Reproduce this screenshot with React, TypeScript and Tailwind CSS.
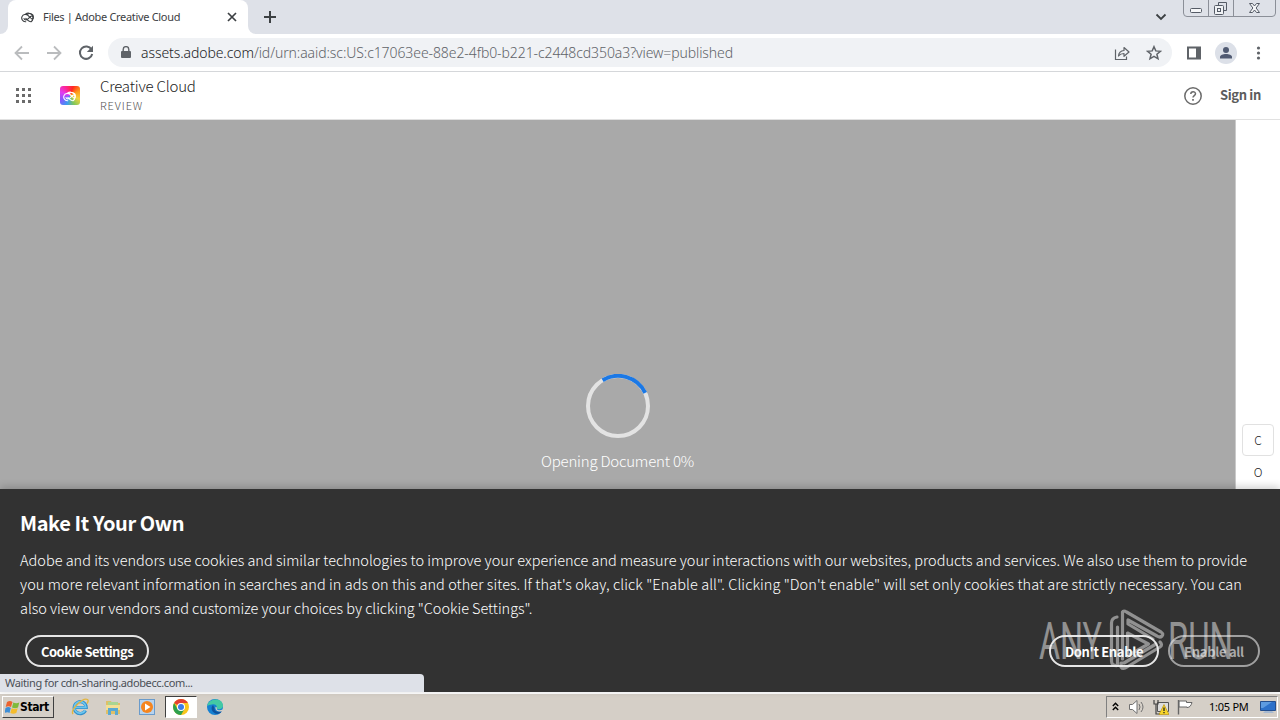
import type { ReactNode } from 'react'
import { clsx } from 'clsx'

const CLEAN = "font-['Noto_Sans_CJK_SC','Open_Sans',sans-serif]"
const TAHOMA = "font-['Noto_Sans',sans-serif]"

function CloudLogo({ className }: { className?: string }) {
  return (
    <svg viewBox="0 0 16 12" className={className} fill="none" stroke="currentColor" strokeWidth="1.2">
      <path d="M5.500 11H4.600A3.900 3.900 0 1 1 7.400 4.300l3 3" />
      <path d="M4.800 2.900A5 5 0 1 1 10.800 11c-1.400.1-2.500-.4-3.400-1.300L4.800 7.200" />
      <path d="M3 7.200c.6 2.400 3 2.400 4.800.6l2.400-2.300c1.400-1.200 3-.5 3 1 0 1.400-1.600 2-2.700 1" />
      <path d="M6.500 3.500c2.500-2.500 6.500-1 6.800 2" />
    </svg>
  )
}

function TabStrip() {
  return (
    <div className="flex h-[34px] bg-[#dee1e8]">
      <div className="w-2 bg-white">
        <div className="h-full rounded-br-lg bg-[#dee1e8]" />
      </div>
      <div className={clsx('flex w-[240px] items-center rounded-t-lg bg-white pl-[13px] pr-[10px] text-[11px] text-[#3c4043]', TAHOMA)}>
        <CloudLogo className="h-3 w-[15px] text-[#3c3f42]" />
        <span className="ml-[7px] whitespace-nowrap tracking-[-0.32px]">Files | Adobe Creative Cloud</span>
        <svg className="ml-auto h-3 w-3" viewBox="0 0 12 12" stroke="#3c4043" strokeWidth="1.7">
          <path d="M2 2l8 8M10 2l-8 8" />
        </svg>
      </div>
      <div className="w-2 bg-white">
        <div className="h-full rounded-bl-lg bg-[#dee1e8]" />
      </div>
      <svg className="ml-[7px] mt-[10px] h-[14px] w-[14px]" viewBox="0 0 14 14" stroke="#3c4043" strokeWidth="2">
        <path d="M7 1v12M1 7h12" />
      </svg>
      <svg className="ml-auto mr-[16px] mt-[12px] h-[10px] w-[12px]" viewBox="0 0 12 10" fill="none" stroke="#3c4043" strokeWidth="1.8">
        <path d="M1.500 2.500L6 7l4.500-4.500" />
      </svg>
      <svg className="mr-[4px] h-[17px] w-[93px]" viewBox="0 0 93 17" fill="none" stroke="#8b8f98">
        <path d="M.5 0v13q0 3.500 3.500 3.500h85q3.500 0 3.500-3.500V0M25.500 0v16M50.500 0v16" />
        <g stroke="#555b66">
          <rect x="7.500" y="8.500" width="11" height="4" rx="1" fill="#f5f6f8" />
          <path d="M35.500 5V2.500h8v8H41" />
          <rect x="31.500" y="5.500" width="9" height="9" rx="1" fill="#f0f2f5" />
          <rect x="34.500" y="8.500" width="3" height="3" />
          <path d="M66.500 3.500h3l2 2.500 2-2.500h3l-3.400 4.500 3.400 4.500h-3l-2-2.500-2 2.500h-3L69.900 8z" fill="#f5f6f8" />
        </g>
      </svg>
    </div>
  )
}

function Toolbar() {
  return (
    <div className="flex h-[38px] items-center border-b border-[#d5d7da] bg-white">
      <svg className="ml-[14px] h-4 w-4" viewBox="0 0 16 16" fill="none" stroke="#babcbe" strokeWidth="1.800">
        <path d="M15 8H2M8 1.500L1.500 8 8 14.500" />
      </svg>
      <svg className="ml-4 h-4 w-4" viewBox="0 0 16 16" fill="none" stroke="#babcbe" strokeWidth="1.800">
        <path d="M1 8h13M8 1.500L14.500 8 8 14.500" />
      </svg>
      <svg className="ml-4 h-4 w-4" viewBox="0 0 16 16" fill="none" stroke="#5f6368" strokeWidth="2">
        <path d="M13.500 4.500A6.200 6.200 0 1 0 14.200 9" />
        <path d="M15 .8V7H8.800z" fill="#5f6368" stroke="none" />
      </svg>
      <div className="ml-[14px] flex h-[29px] w-[1064px] items-center rounded-full bg-[#f0f2f5] pl-[13px] pr-[10px]">
        <svg className="h-[14px] w-[10px]" viewBox="0 0 10 14">
          <rect y="5" width="10" height="7" rx="1" fill="#5f6368" />
          <path d="M2.200 6V3.400a2.800 2.800 0 0 1 5.600 0V6" fill="none" stroke="#5f6368" strokeWidth="1.400" />
        </svg>
        <span className="ml-[10px] whitespace-nowrap font-['Noto_Sans',sans-serif] text-[14px] font-light tracking-[-0.085px] text-[#5f6368]">
          <span className="text-[#202124]">assets.adobe.com</span>/id/urn:aaid:sc:US:c17063ee-88e2-4fb0-b221-c2448cd350a3?view=published
        </span>
        <svg className="ml-auto h-4 w-4" viewBox="0 0 16 16" fill="none" stroke="#5f6368" strokeWidth="1.200">
          <path d="M1.500 4.500v10h11v-3" />
          <path d="M4.500 11c.3-3.600 2.300-5.300 5.500-5.500V2.500L15 7l-5 4.300V8.500c-2.600 0-4.200.8-5.500 2.500z" strokeLinejoin="round" />
        </svg>
        <svg className="ml-4 h-4 w-4" viewBox="0 0 16 16" fill="none" stroke="#5f6368" strokeWidth="1.500">
          <path d="M8 1.700l1.800 4.200 4.600.4-3.500 3 1.100 4.500-4-2.400-4 2.400 1.100-4.500-3.500-3 4.600-.4z" />
        </svg>
      </div>
      <svg className="ml-[14px] h-4 w-4" viewBox="0 0 16 16">
        <path d="M1 1.500h14v13H1zM3 3.500v9h7v-9z" fill="#5f6368" fillRule="evenodd" />
      </svg>
      <svg className="ml-[13px] h-[22px] w-[22px]" viewBox="0 0 22 22">
        <circle cx="11" cy="11" r="11" fill="#dce0e8" />
        <circle cx="11" cy="8" r="3" fill="#505a72" />
        <path d="M5 16.500v-1.500c0-4 12-4 12 0v1.500z" fill="#505a72" />
      </svg>
      <svg className="ml-[19px] h-4 w-4" viewBox="0 0 16 16" fill="#5f6368">
        <circle cx="2.500" cy="3" r="1.600" />
        <circle cx="2.500" cy="8" r="1.600" />
        <circle cx="2.500" cy="13" r="1.600" />
      </svg>
    </div>
  )
}

function AppHeader() {
  return (
    <header className={clsx('flex h-12 items-center border-b border-[#e1e1e1] bg-white', CLEAN)}>
      <div className="ml-4 grid grid-cols-3 gap-[3px]">
        {Array.from({ length: 9 }, (_, i) => (
          <i key={i} className="h-[3px] w-[3px] bg-[#6b6b6b]" />
        ))}
      </div>
      <div className="ml-[29px] flex h-[19px] w-5 items-center justify-center rounded-[3px] bg-[conic-gradient(from_20deg,#ff2a20,#ff9c18,#f3d33c,#7fc85a,#3b9df0,#8b55ff,#e23cf2,#ff248c,#ff2a20)]">
        <CloudLogo className="h-3 w-[15px] text-white" />
      </div>
      <div className="ml-5 flex flex-col whitespace-nowrap pb-[2px]">
        <span className="text-[15px] font-light leading-[18px] tracking-[-0.2px] text-[#222]">Creative Cloud</span>
        <span className="mt-[3px] text-[11px] font-light leading-[14px] tracking-[0.9px] text-[#505050]">REVIEW</span>
      </div>
      <svg className="ml-auto h-[18px] w-[18px]" viewBox="0 0 18 18" fill="none" stroke="#6b6b6b" strokeWidth="1.500">
        <circle cx="9" cy="9" r="8.200" />
        <path d="M6.800 7c0-3 4.700-2.900 4.700-.2 0 1.800-2.500 1.800-2.500 3.700" />
        <path d="M9 12v1.700" strokeWidth="1.700" />
      </svg>
      <span className="ml-[18px] mr-[20px] w-10 whitespace-nowrap pb-[2px] text-[13px] font-bold leading-5 tracking-[-0.35px] text-[#5c5c5c]">Sign in</span>
    </header>
  )
}

function Viewer() {
  return (
    <main className={clsx('flex h-[369px]', CLEAN)}>
      <div className="flex w-[1235px] flex-col items-center bg-[#a9a9a9] pt-[254px]">
        <svg className="h-16 w-16" viewBox="0 0 64 64" fill="none" strokeWidth="4">
          <circle cx="32" cy="32" r="30" stroke="#e3e3e3" />
          <path d="M16.600 6.300A30 30 0 0 1 59.200 18.800" stroke="#1b78e5" />
        </svg>
        <span className="mt-[11px] whitespace-nowrap text-[15px] font-light leading-6 tracking-[-0.22px] text-white">Opening Document 0%</span>
      </div>
      <aside className="flex w-[45px] flex-col items-center border-l border-[#cacaca] bg-white pt-[304px] text-[12px] font-light text-[#222]">
        <div className="flex h-8 w-8 items-center justify-center rounded-sm border border-[#e1e1e1]">C</div>
        <div className="flex h-8 w-8 items-center justify-center">O</div>
      </aside>
    </main>
  )
}

function PillButton({ className, children }: { className?: string; children: ReactNode }) {
  return (
    <button className={clsx('h-8 whitespace-nowrap rounded-full border-2 text-[13px] font-bold leading-none', className)}>
      {children}
    </button>
  )
}

function Watermark() {
  return (
    <svg className="absolute left-[1036px] top-[120px] h-[66px] w-[200px]" viewBox="0 0 200 66" opacity=".5">
      <g fill="#efefef" className="font-['Roboto',sans-serif] text-[52px] font-normal">
        <text x="3" y="50" textLength="63" lengthAdjust="spacingAndGlyphs">ANY</text>
        <text x="132" y="50" textLength="65" lengthAdjust="spacingAndGlyphs">RUN</text>
      </g>
      <g fill="none" stroke="#efefef" strokeWidth="3.200" strokeLinejoin="round" strokeLinecap="round">
        <path d="M81 8q-5.500 1-5.500 6v38q0 5 6 4.500V18" />
        <path d="M86.500 50V3q1-2 4 0L125 23q3 2 1 4t-5 0L92 11v4l25 15" />
        <path d="M124 33q3 3 0 5L91 58q-4 3-6 0V54l3 0 32-19M91.500 46V24l21 11-21 12" />
      </g>
    </svg>
  )
}

function CookieBanner() {
  return (
    <section className={clsx('relative h-[203px] bg-[#323232] pt-[20px] text-white shadow-[0_-2px_8px_rgba(0,0,0,0.2)]', CLEAN)}>
      <h2 className="ml-5 text-[20px] font-bold leading-[28px] tracking-[-0.4px]">Make It Your Own</h2>
      <div className="ml-5 mt-[11px] whitespace-nowrap text-[14.5px] font-light leading-6 text-white">
        <p className="tracking-[-0.002px]">Adobe and its vendors use cookies and similar technologies to improve your experience and measure your interactions with our websites, products and services. We also use them to provide</p>
        <p className="tracking-[0.06px]">you more relevant information in searches and in ads on this and other sites. If that's okay, click "Enable all". Clicking "Don't enable" will set only cookies that are strictly necessary. You can</p>
        <p className="tracking-[-0.04px]">also view our vendors and customize your choices by clicking "Cookie Settings".</p>
      </div>
      <div className="mt-[15px] flex pl-[25px] pr-5">
        <PillButton className="w-[124px] border-[#e6e6e6] tracking-[-0.5px]">Cookie Settings</PillButton>
        <PillButton className="ml-auto w-[110px] border-[#e6e6e6] tracking-[-0.35px]">Don't Enable</PillButton>
        <PillButton className="ml-[9px] w-[92px] border-[#a0a0a0] tracking-[-0.3px] text-[#a9a9a9]">Enable all</PillButton>
      </div>
      <Watermark />
      <div className={clsx('absolute bottom-0 left-0 h-[18px] w-[424px] rounded-tr-[4px] bg-[#dee1e8] pl-[5px] text-[11px] leading-[18px] tracking-[-0.37px] text-[#4b4f56]', TAHOMA)}>
        Waiting for cdn-sharing.adobecc.com...
      </div>
    </section>
  )
}

function QuickLaunch() {
  return (
    <div className="flex items-center">
      <svg className="ml-[17px] h-[18px] w-[18px]" viewBox="0 0 18 18" fill="none">
        <path d="M14.500 12.500a6 6 0 1 1 .7-3H4" stroke="#2f8fcb" strokeWidth="3.200" />
        <path d="M14.200 12.200a5.800 5.800 0 1 1 .7-2.800H4" stroke="#6cc5ee" strokeWidth="1.800" />
        <path d="M2 16C-1 12 12-1 16.500 1.500c1.200.8.500 2.500-.5 4" stroke="#e3b640" strokeWidth="1.400" />
      </svg>
      <svg className="ml-4 h-4 w-4" viewBox="0 0 16 16">
        <path d="M1 2h5l1 2h8v11H1z" fill="#dfc067" />
        <path d="M3 3h10v4H3z" fill="#a9d591" />
        <path d="M1 6h14v5H1z" fill="#f3df94" />
        <path d="M3 16V9h10v7h-3v-4H6v4z" fill="#5aa9d2" />
      </svg>
      <svg className="ml-[18px] h-4 w-4" viewBox="0 0 16 16">
        <rect x=".5" y=".5" width="15" height="15" fill="#b7d3ee" stroke="#6a9bcb" />
        <circle cx="8" cy="8" r="6" fill="#f5851f" />
        <path d="M6 4.500l5.500 3.500L6 11.500z" fill="#fff" />
      </svg>
      <div className="ml-[10px] flex h-[22px] w-8 items-center justify-center border border-b-white border-l-[#404040] border-r-white border-t-[#404040] bg-white">
        <svg className="h-4 w-4" viewBox="0 0 16 16">
          <circle cx="8" cy="8" r="8" fill="#f9c51c" />
          <path d="M8 8L1.100 4A8 8 0 0 1 14.900 4H8z" fill="#e24032" />
          <path d="M1.100 4A8 8 0 0 0 8 16l3.500-6L8 8 4.500 10z" fill="#2da04e" />
          <circle cx="8" cy="8" r="4" fill="#fff" />
          <circle cx="8" cy="8" r="3" fill="#3b7de8" />
        </svg>
      </div>
      <svg className="ml-[10px] h-4 w-4" viewBox="0 0 16 16">
        <circle cx="8" cy="8" r="8" fill="#1681d2" />
        <path d="M.3 7C1-1 16-2 16 7c0 3-4 4-6.500 2.500C11 7 8 4.500 5 5.500 3 6 1 6 .3 7z" fill="#43c9a4" />
        <path d="M6 6c-3 3-1 8 4 9 2 0 4-1 5-3-4 2-8 0-7.500-3z" fill="#0e529e" />
        <path d="M8.500 8c1.500 0 2 1 1 2 1.600 1.700 4 1.600 6.400.3V12c-3.500 1.500-8 0-7.400-4z" fill="#d6d0c8" />
      </svg>
    </div>
  )
}

function Tray() {
  return (
    <div className="ml-auto mr-[2px] flex h-[22px] w-[172px] items-center border border-b-white border-l-[#808080] border-r-white border-t-[#808080] pl-[5px]">
      <svg className="mb-[2px] h-[9px] w-[7px]" viewBox="0 0 7 9" fill="none" stroke="#000" strokeWidth="1.400">
        <path d="M.8 4l2.700-2.700L6.200 4M.8 8l2.700-2.700L6.200 8" />
      </svg>
      <svg className="ml-[10px] h-4 w-4" viewBox="0 0 16 16" fill="#fff" stroke="#707070">
        <path d="M.5 5.500h3L8 1.500v13l-4.500-4h-3z" />
        <path d="M10 5q2 3 0 6M12 3q4 5 0 10" fill="none" />
      </svg>
      <svg className="ml-2 h-4 w-4" viewBox="0 0 16 16">
        <path d="M4.500 3.500h11v9h-11z" fill="#ddd" stroke="#555" />
        <path d="M1 1v4h4V1M3 5v10h4" fill="none" stroke="#444" strokeWidth="1.200" />
        <path d="M11 5.500l5 10H6z" fill="#f7d52a" stroke="#b68a00" strokeWidth=".6" />
        <path d="M11 8.500v3.500M11 13v1.200" stroke="#222" strokeWidth="1.300" />
      </svg>
      <svg className="ml-2 h-4 w-4" viewBox="0 0 16 16" fill="#fff" stroke="#666">
        <path d="M2 2h7.500v1.500H15c-1 3-2 5-5 5V8H2z" />
        <path d="M1.500 1v14.500" strokeWidth="1.400" />
      </svg>
      <span className={clsx('ml-[16px] whitespace-nowrap text-[11px] tracking-[-0.25px] text-black', TAHOMA)}>1:05 PM</span>
      <svg className="ml-auto mr-[1px] h-[14px] w-4" viewBox="0 0 16 14">
        <path d="M.5 1.500h15v9H.5z" fill="#2d71c9" stroke="#244f8e" />
        <path d="M1 2h11L3 8H1z" fill="#5d9be0" />
        <path d="M5 11h7l2 2H3z" fill="#a7b9d0" />
      </svg>
    </div>
  )
}

function Taskbar() {
  return (
    <footer className="flex h-7 items-center border-t-2 border-t-white bg-[#d5cfc7]">
      <div className="ml-[2px] flex h-[22px] w-[52px] items-center border border-b-[#404040] border-l-white border-r-[#404040] border-t-white pl-[2px] font-['DejaVu_Sans_Condensed','DejaVu_Sans',sans-serif] font-bold text-black">
        <svg className="h-[15px] w-[15px] shrink-0" viewBox="0 0 15 15">
          <path d="M2 2q3-2 5.500 0L6 7Q3.500 5.500.7 7z" fill="#ec632f" />
          <path d="M8.300 2.500q3 1.500 6 0L13 7.500q-3 1.500-6 0z" fill="#7fba3c" />
          <path d="M.5 8q3-2 5.300 0L4.500 13Q2.500 11.500-.5 13z" fill="#3e8ed6" />
          <path d="M6.700 8.300q3 1.600 6 0L11.300 13q-3 1.500-6 0z" fill="#f5bc2c" />
        </svg>
        <span className="text-[12px] leading-4 tracking-[-0.4px]">Start</span>
      </div>
      <QuickLaunch />
      <Tray />
    </footer>
  )
}

export default function App() {
  return (
    <div className="flex h-[720px] w-[1280px] flex-col overflow-hidden bg-white">
      <TabStrip />
      <Toolbar />
      <AppHeader />
      <Viewer />
      <CookieBanner />
      <Taskbar />
    </div>
  )
}
